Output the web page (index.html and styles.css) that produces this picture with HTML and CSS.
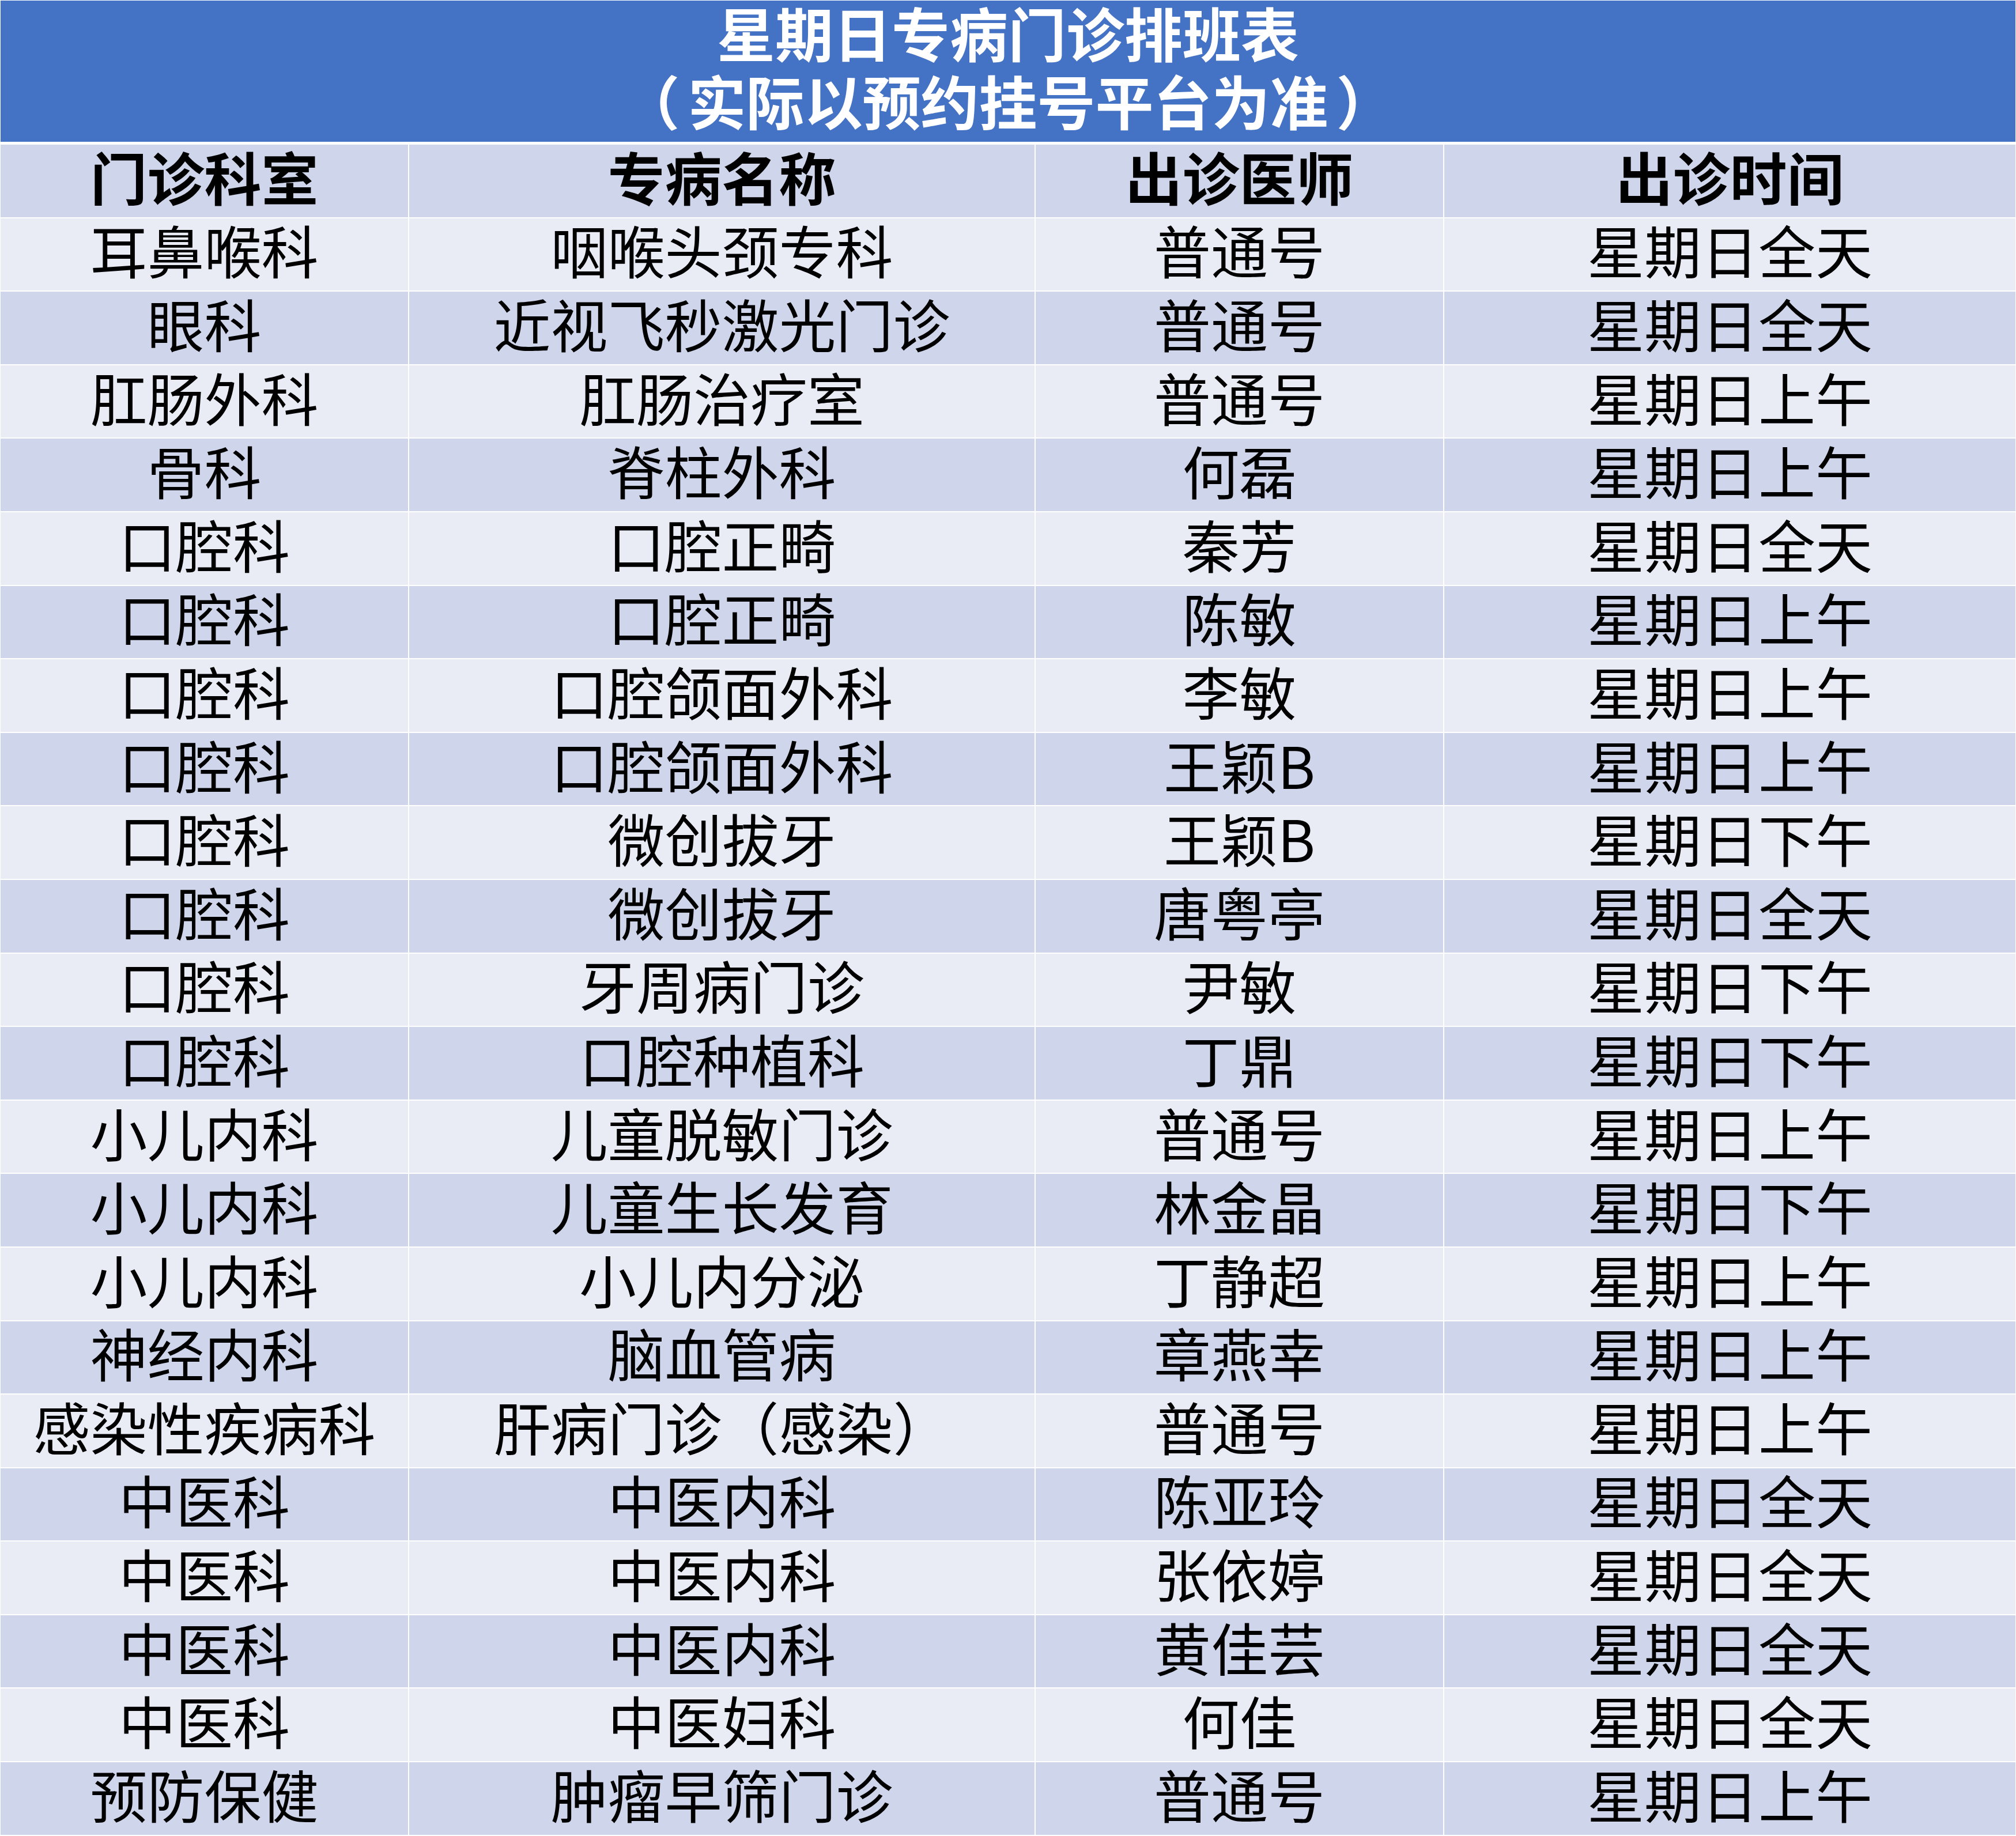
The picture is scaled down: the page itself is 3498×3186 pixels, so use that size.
FILE: index.html
```html
<!DOCTYPE html>
<html lang="zh-CN">
<head>
<meta charset="utf-8">
<title>星期日专病门诊排班表</title>
<link rel="stylesheet" href="styles.css">
</head>
<body>
<div class="sheet">
  <div class="title">
    <div class="title-line">星期日专病门诊排班表</div>
    <div class="title-line"><span class="lp">（</span>实际以预约挂号平台为准<span class="rp">）</span></div>
  </div>
  <div class="table">
    <div class="cell head">门诊科室</div><div class="cell head">专病名称</div><div class="cell head">出诊医师</div><div class="cell head">出诊时间</div>
    <div class="cell light">耳鼻喉科</div><div class="cell light">咽喉头颈专科</div><div class="cell light">普通号</div><div class="cell light">星期日全天</div>
    <div class="cell dark">眼科</div><div class="cell dark">近视飞秒激光门诊</div><div class="cell dark">普通号</div><div class="cell dark">星期日全天</div>
    <div class="cell light">肛肠外科</div><div class="cell light">肛肠治疗室</div><div class="cell light">普通号</div><div class="cell light">星期日上午</div>
    <div class="cell dark">骨科</div><div class="cell dark">脊柱外科</div><div class="cell dark">何磊</div><div class="cell dark">星期日上午</div>
    <div class="cell light">口腔科</div><div class="cell light">口腔正畸</div><div class="cell light">秦芳</div><div class="cell light">星期日全天</div>
    <div class="cell dark">口腔科</div><div class="cell dark">口腔正畸</div><div class="cell dark">陈敏</div><div class="cell dark">星期日上午</div>
    <div class="cell light">口腔科</div><div class="cell light">口腔颌面外科</div><div class="cell light">李敏</div><div class="cell light">星期日上午</div>
    <div class="cell dark">口腔科</div><div class="cell dark">口腔颌面外科</div><div class="cell dark">王颖B</div><div class="cell dark">星期日上午</div>
    <div class="cell light">口腔科</div><div class="cell light">微创拔牙</div><div class="cell light">王颖B</div><div class="cell light">星期日下午</div>
    <div class="cell dark">口腔科</div><div class="cell dark">微创拔牙</div><div class="cell dark">唐粤亭</div><div class="cell dark">星期日全天</div>
    <div class="cell light">口腔科</div><div class="cell light">牙周病门诊</div><div class="cell light">尹敏</div><div class="cell light">星期日下午</div>
    <div class="cell dark">口腔科</div><div class="cell dark">口腔种植科</div><div class="cell dark">丁鼎</div><div class="cell dark">星期日下午</div>
    <div class="cell light">小儿内科</div><div class="cell light">儿童脱敏门诊</div><div class="cell light">普通号</div><div class="cell light">星期日上午</div>
    <div class="cell dark">小儿内科</div><div class="cell dark">儿童生长发育</div><div class="cell dark">林金晶</div><div class="cell dark">星期日下午</div>
    <div class="cell light">小儿内科</div><div class="cell light">小儿内分泌</div><div class="cell light">丁静超</div><div class="cell light">星期日上午</div>
    <div class="cell dark">神经内科</div><div class="cell dark">脑血管病</div><div class="cell dark">章燕幸</div><div class="cell dark">星期日上午</div>
    <div class="cell light">感染性疾病科</div><div class="cell light">肝病门诊（感染）</div><div class="cell light">普通号</div><div class="cell light">星期日上午</div>
    <div class="cell dark">中医科</div><div class="cell dark">中医内科</div><div class="cell dark">陈亚玲</div><div class="cell dark">星期日全天</div>
    <div class="cell light">中医科</div><div class="cell light">中医内科</div><div class="cell light">张依婷</div><div class="cell light">星期日全天</div>
    <div class="cell dark">中医科</div><div class="cell dark">中医内科</div><div class="cell dark">黄佳芸</div><div class="cell dark">星期日全天</div>
    <div class="cell light">中医科</div><div class="cell light">中医妇科</div><div class="cell light">何佳</div><div class="cell light">星期日全天</div>
    <div class="cell dark">预防保健</div><div class="cell dark">肿瘤早筛门诊</div><div class="cell dark">普通号</div><div class="cell dark">星期日上午</div>
  </div>
</div>
</body>
</html>
```
FILE: styles.css
```css
html, body {
  margin: 0;
  padding: 0;
  background: #ffffff;
}
body {
  font-family: "Noto Sans CJK SC", "Noto Sans", sans-serif;
  color: #000000;
}
.sheet {
  padding: 1px 1px 0 1px;
  width: 3496px;
}
.title {
  height: 245px;
  background: #4472C4;
  color: #ffffff;
  font-weight: 700;
  font-size: 101px;
  display: flex;
  flex-direction: column;
  justify-content: center;
  align-items: center;
  box-sizing: border-box;
  padding-bottom: 20px;
}
.title-line {
  line-height: 118px;
  white-space: nowrap;
}
.lp {
  margin-right: 14px;
}
.rp {
  margin-left: 14px;
}
.table {
  margin-top: 5px;
  display: grid;
  grid-template-columns: 707px 1085px 707px 991px;
  grid-auto-rows: 125.6px;
  column-gap: 2px;
  row-gap: 2px;
}
.cell {
  display: flex;
  align-items: center;
  justify-content: center;
  font-size: 99px;
  line-height: 1;
  white-space: nowrap;
  padding-bottom: 17px;
  box-sizing: border-box;
}
.head {
  background: #CFD5EA;
  font-weight: 700;
}
.dark {
  background: #CFD5EA;
}
.light {
  background: #E9EBF5;
}
```
